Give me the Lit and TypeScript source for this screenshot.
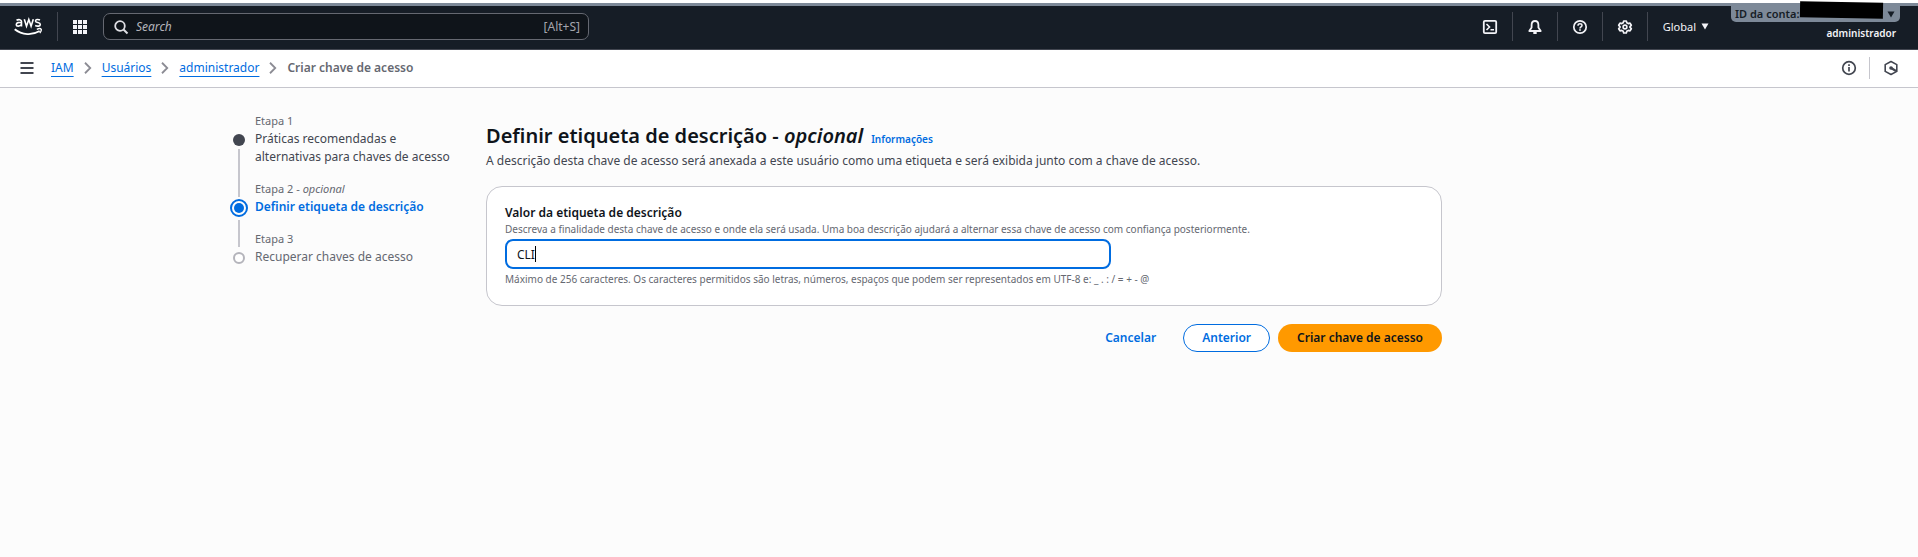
import { LitElement, html, css, svg, nothing } from 'lit';
import { customElement, property, state } from 'lit/decorators.js';
import { classMap } from 'lit/directives/class-map.js';

type StepState = 'done' | 'active' | 'pending';

interface Step {
  name: string;
  title: string;
  optional?: boolean;
  state: StepState;
}

const STEPS: Step[] = [
  { name: 'Etapa 1', title: 'Práticas recomendadas e alternativas para chaves de acesso', state: 'done' },
  { name: 'Etapa 2', title: 'Definir etiqueta de descrição', optional: true, state: 'active' },
  { name: 'Etapa 3', title: 'Recuperar chaves de acesso', state: 'pending' },
];

const stroke = (body: unknown, size = 16) => html`
  <svg width=${size} height=${size} viewBox="0 0 16 16" fill="none" stroke="currentColor" stroke-width="2" aria-hidden="true">${body}</svg>
`;

const ICONS = {
  terminal: svg`<rect x="1.800" y="1.800" width="12.400" height="12.400" rx="1.200" stroke-width="1.800"/><path d="M4.500 5 7.500 8l-3 3M8.500 10.800h3.500" stroke-width="1.600"/>`,
  bell: svg`<path d="M8 2C5.500 2 4.600 3.800 4.600 6v2.500L2.300 12h11.400L11.400 8.500V6C11.400 3.800 10.500 2 8 2z" stroke-linejoin="round" stroke-width="1.800"/><path d="M6.300 14h3.400"/>`,
  help: svg`<circle cx="8" cy="8" r="6.200" stroke-width="1.700"/><path d="M6 6.700C6 5.500 6.800 4.800 8 4.800s2 .7 2 1.700c0 1.300-2 1.500-2 3" stroke-width="1.500"/><path d="M8 10.300v1.500" stroke-width="1.700"/>`,
  gear: svg`<path d="M6.700 2h2.600l.5 1.800 1.400.8 1.800-.5 1.300 2.200L13 7.600v.8l1.300 1.300-1.300 2.200-1.800-.5-1.400.8L9.300 14H6.700l-.5-1.800-1.400-.8-1.800.5-1.300-2.200L3 8.400v-.8L1.700 6.300 3 4.100l1.800.5 1.400-.8z" stroke-linejoin="round" stroke-width="1.700"/><circle cx="8" cy="8" r="1.900" stroke-width="1.600"/>`,
  search: svg`<circle cx="7" cy="7" r="4.800" stroke-width="1.800"/><path d="m10.500 10.500 4 4"/>`,
  menu: svg`<path d="M1.500 3h13M1.500 8h13M1.500 13h13"/>`,
  chevron: svg`<path d="m4 1 7 7-7 7" stroke-width="2.400"/>`,
  info: svg`<circle cx="8" cy="8" r="6.300" stroke-width="1.700"/><path d="M8 7v4.500M8 4.300v1.600" stroke-width="1.700"/>`,
  hexagon: svg`<path d="M8 1.500 13.800 4.600v6.800L8 14.500 2.200 11.400V4.600z" stroke-linejoin="round" stroke-width="1.600"/><circle cx="8" cy="8" r="1.800" fill="currentColor" stroke="none"/><path d="m8.500 8.300 4.500 2.700" stroke-width="2.200"/>`,
};

const caret = html`<svg width="8" height="7" viewBox="0 0 8 7" aria-hidden="true"><path d="M.5.5h7L4 6.500z" fill="currentColor"/></svg>`;

@customElement('console-header')
class ConsoleHeader extends LitElement {
  static styles = css`
    :host {
      display: block;
      border-top: 3px solid #fff;
    }
    * { box-sizing: border-box; }
    .bar {
      position: relative;
      display: flex;
      align-items: center;
      height: 47px;
      padding: 0 18px 2px 14px;
      color: #f3f3f7;
      background: #161d26;
      border-top: 3px solid #7d8998;
      border-bottom: 1px solid #424650;
    }
    button, .logo {
      display: flex;
      align-items: center;
      justify-content: center;
      padding: 0;
      border: 0;
      background: none;
      color: inherit;
      font: inherit;
      cursor: pointer;
    }
    .logo { width: 28px; }
    .rule { width: 1px; height: 29px; background: #424650; }
    .logo + .rule { margin-left: 15px; }
    .apps { width: 45px; padding-right: 1px; }
    .search {
      display: flex;
      align-items: center;
      gap: 7px;
      flex: 0 1 486px;
      height: 27px;
      padding: 0 8px 0 9px;
      border: 1px solid #656871;
      border-radius: 7px;
      background: #0f141a;
      color: #dedee3;
    }
    .search input {
      flex: 1;
      min-width: 0;
      padding: 0;
      border: 0;
      outline: 0;
      background: none;
      color: inherit;
      font: inherit;
    }
    .search input::placeholder { color: #b4b4bb; font-style: italic; opacity: 1; }
    .key { color: #a4a4ad; }
    .tools {
      display: flex;
      align-items: center;
      margin-left: auto;
    }
    .tool { width: 44px; height: 29px; }
    .region { gap: 5px; padding: 0 22px 0 15px; font-size: 11px; }
    .account {
      align-self: flex-start;
      display: flex;
      flex-direction: column;
      align-items: flex-end;
      font-size: 11px;
      font-weight: 600;
      line-height: 20px;
    }
    .id {
      position: relative;
      width: 169px;
      height: 16px;
      padding: 0 5px 0 4px;
      justify-content: space-between;
      border-radius: 0 0 5px 5px;
      background: #7d8998;
      color: #161d26;
      font-size: 11px;
      line-height: 16px;
    }
    .mask {
      position: absolute;
      top: -4px;
      right: 17px;
      width: 83px;
      height: 16px;
      background: #000;
      transform: rotate(1deg);
    }
    .user { padding: 1px 4px 0 0; font-size: 10px; }
  `;

  render() {
    return html`
      <header class="bar">
        <a class="logo" href="#" aria-label="aws">
          <svg width="28" height="19" viewBox="0 0 28 19" fill="none" stroke="#fff" stroke-width="1.6" aria-hidden="true">
            <path d="M2.500 3.300c2.200-1.200 5-.8 5 1.300v4.900M7.500 5.700C5 5.200 2.300 5.400 2.300 7.400c0 2.300 3.600 2.300 5.200 0M10.300 2.300l2.200 6.900 2.300-6.700 2.300 6.700 2.200-6.900M26 3c-2-.9-4.500-.6-4.500.9 0 2.200 4.800 1.100 4.800 3.500 0 2-3 2.200-5.100 1.100"/>
            <path d="M.7 12.200c7.300 6 17.800 6.300 25 1.900" stroke-width="1.800"/>
            <path d="M22.800 12.300c2-.9 3.800-.8 4.300-.2.400.7-.3 2.700-1.300 4" stroke-width="1.400"/>
          </svg>
        </a>
        <span class="rule"></span>
        <button class="apps" aria-label="Serviços">
          <svg width="14" height="14" viewBox="0 0 14 14" fill="currentColor" aria-hidden="true">
            ${[0, 5, 10].map((y) => [0, 5, 10].map((x) => svg`<rect x=${x} y=${y} width="4" height="4"/>`))}
          </svg>
        </button>
        <label class="search">
          ${stroke(ICONS.search)}
          <input type="search" placeholder="Search" aria-label="Search" />
          <span class="key">[Alt+S]</span>
        </label>
        <div class="tools">
          <button class="tool" aria-label="CloudShell">${stroke(ICONS.terminal)}</button>
          <span class="rule"></span>
          <button class="tool" aria-label="Notificações">${stroke(ICONS.bell)}</button>
          <span class="rule"></span>
          <button class="tool" aria-label="Ajuda">${stroke(ICONS.help)}</button>
          <span class="rule"></span>
          <button class="tool" aria-label="Configurações">${stroke(ICONS.gear)}</button>
          <span class="rule"></span>
          <button class="region">Global ${caret}</button>
        </div>
        <div class="account">
          <button class="id">ID da conta: ${caret}<span class="mask"></span></button>
          <span class="user">administrador</span>
        </div>
      </header>
    `;
  }
}

@customElement('console-breadcrumbs')
class ConsoleBreadcrumbs extends LitElement {
  static styles = css`
    .bar {
      display: flex;
      align-items: center;
      box-sizing: border-box;
      height: 38px;
      padding: 0 19px 2px 19px;
      border-bottom: 1px solid #c6c6cd;
      background: #fff;
      color: #424650;
    }
    button {
      display: flex;
      padding: 0;
      border: 0;
      background: none;
      color: inherit;
    }
    ol {
      display: flex;
      align-items: center;
      gap: 8px;
      flex: 1;
      margin: 0 0 0 16px;
      padding: 0;
      list-style: none;
    }
    li { display: flex; align-items: center; gap: 8px; }
    li svg { color: #8c8c94; }
    a { color: #006ce0; text-underline-offset: 4px; }
    .current { color: #656871; font-weight: 600; }
    .rule { width: 1px; height: 22px; margin: 0 13px 0 12px; background: #c6c6cd; }
  `;

  render() {
    return html`
      <nav class="bar" aria-label="Trilha">
        <button aria-label="Menu">${stroke(ICONS.menu)}</button>
        <ol>
          ${['IAM', 'Usuários', 'administrador'].map(
            (label) => html`<li><a href="#">${label}</a>${stroke(ICONS.chevron, 12)}</li>`,
          )}
          <li class="current" aria-current="page">Criar chave de acesso</li>
        </ol>
        <button aria-label="Informações">${stroke(ICONS.info)}</button>
        <span class="rule"></span>
        <button aria-label="Assistente">${stroke(ICONS.hexagon)}</button>
      </nav>
    `;
  }
}

@customElement('wizard-steps')
class WizardSteps extends LitElement {
  @property({ attribute: false }) steps: Step[] = [];

  static styles = css`
    ol { margin: 0; padding: 0; list-style: none; }
    li {
      display: grid;
      grid-template-columns: 18px minmax(0, 1fr);
      column-gap: 7px;
      line-height: 18px;
      color: #656871;
    }
    .track {
      display: flex;
      flex-direction: column;
      align-items: center;
      gap: 3px;
      padding-top: 19px;
    }
    .dot {
      box-sizing: border-box;
      flex: none;
      width: 18px;
      height: 18px;
      border: 3px solid transparent;
      border-radius: 50%;
      background: #424650 padding-box;
    }
    .line { flex: 1; width: 2px; margin-bottom: -17px; background: #c6c6cd; }
    .done .line { margin-top: -3px; }
    .active .dot {
      border: 2px solid #006ce0;
      background: #006ce0 content-box;
      padding: 2px;
    }
    .pending .dot {
      width: 12px;
      height: 12px;
      margin-top: 3px;
      border: 2px solid #b4b4bb;
      background: #fff;
    }
    .text { padding-bottom: 14px; }
    .name { font-size: 11px; }
    .done .title { color: #424650; }
    .active .title { color: #006ce0; font-weight: 600; }
  `;

  render() {
    return html`
      <nav aria-label="Etapas">
        <ol>
          ${this.steps.map(
            (step, i) => html`
              <li class=${classMap({ [step.state]: true })}>
                <div class="track">
                  <span class="dot"></span>
                  ${i < this.steps.length - 1 ? html`<span class="line"></span>` : nothing}
                </div>
                <div class="text">
                  <div class="name">${step.name}${step.optional ? html` - <em>opcional</em>` : nothing}</div>
                  <div class="title">${step.title}</div>
                </div>
              </li>
            `,
          )}
        </ol>
      </nav>
    `;
  }
}

@customElement('app-root')
class AppRoot extends LitElement {
  @state() private value = 'CLI';
  @state() private editing = true;

  static styles = css`
    :host {
      display: block;
      min-height: 100vh;
      background: #fcfcfc;
      color: #0f141a;
      font: 12px/18px 'Noto Sans', 'Open Sans', sans-serif;
    }
    * { box-sizing: border-box; }
    main {
      display: grid;
      grid-template-columns: 228px minmax(0, 956px);
      column-gap: 28px;
      max-width: 1506px;
      margin: 0 auto;
      padding: 24px 24px 32px;
    }
    .content { padding-top: 9px; }
    .heading { display: flex; align-items: baseline; gap: 8px; }
    h1 { margin: 0; font-size: 20px; font-weight: 600; line-height: 30px; }
    a { color: #006ce0; text-decoration: none; font-weight: 600; }
    .info { font-size: 10px; }
    .lead { margin: 0 0 15px; color: #424650; line-height: 20px; }
    .card {
      padding: 17px 18px 19px;
      border: 1px solid #c6c6cd;
      border-radius: 16px;
      background: #fff;
    }
    .label { display: block; font-weight: 600; }
    .hint { margin: 0; color: #656871; font-size: 10px; line-height: 14px; }
    .field { position: relative; width: 66%; margin: 3px 0; }
    .field input {
      display: block;
      width: 100%;
      height: 30px;
      padding: 0 10px;
      border: 2px solid #006ce0;
      border-radius: 8px;
      outline: 0;
      background: #fff;
      color: #0f141a;
      font: inherit;
    }
    .cursor {
      position: absolute;
      top: 7px;
      left: 12px;
      display: flex;
      pointer-events: none;
    }
    .cursor span { visibility: hidden; }
    .cursor::after { content: ''; width: 1px; height: 16px; background: #000; }
    .actions {
      display: flex;
      align-items: center;
      justify-content: flex-end;
      gap: 8px;
      margin-top: 18px;
    }
    .actions button {
      height: 28px;
      padding: 0 18px;
      border: 1px solid transparent;
      border-radius: 14px;
      background: none;
      color: #006ce0;
      font: inherit;
      font-weight: 600;
      cursor: pointer;
    }
    .actions .normal { border-color: #006ce0; background: #fff; }
    .actions .primary { background: #ff9900; color: #0f141a; }
  `;

  private onInput(event: Event) {
    this.value = (event.target as HTMLInputElement).value;
    this.editing = false;
  }

  render() {
    return html`
      <console-header></console-header>
      <console-breadcrumbs></console-breadcrumbs>
      <main>
        <wizard-steps .steps=${STEPS}></wizard-steps>
        <section class="content">
          <div class="heading">
            <h1>Definir etiqueta de descrição - <em>opcional</em></h1>
            <a class="info" href="#">Informações</a>
          </div>
          <p class="lead">
            A descrição desta chave de acesso será anexada a este usuário como uma etiqueta e será exibida junto com a chave de acesso.
          </p>
          <div class="card">
            <label class="label" for="tag">Valor da etiqueta de descrição</label>
            <p class="hint" id="about">
              Descreva a finalidade desta chave de acesso e onde ela será usada. Uma boa descrição ajudará a alternar essa chave de acesso com confiança posteriormente.
            </p>
            <div class="field">
              <input id="tag" type="text" maxlength="256" aria-describedby="about limits" .value=${this.value} @input=${this.onInput} />
              ${this.editing ? html`<div class="cursor" aria-hidden="true"><span>${this.value}</span></div>` : nothing}
            </div>
            <p class="hint" id="limits">
              Máximo de 256 caracteres. Os caracteres permitidos são letras, números, espaços que podem ser representados em UTF-8 e: _ . : / = + - @
            </p>
          </div>
          <div class="actions">
            <button type="button">Cancelar</button>
            <button type="button" class="normal">Anterior</button>
            <button type="button" class="primary">Criar chave de acesso</button>
          </div>
        </section>
      </main>
    `;
  }
}
